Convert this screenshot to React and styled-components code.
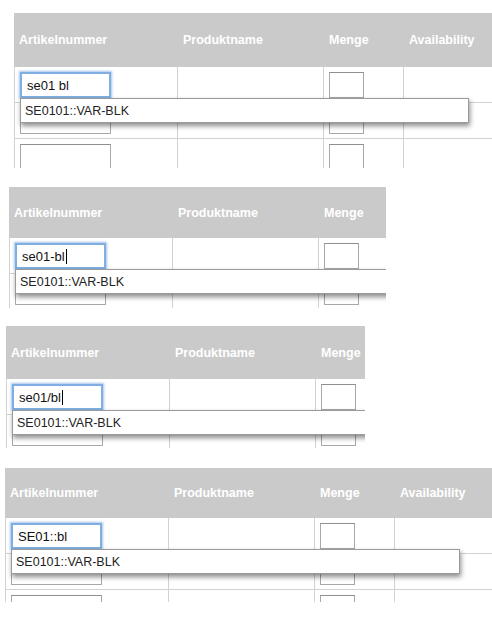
import React from 'react';
import styled, { createGlobalStyle } from 'styled-components';

const GlobalStyle = createGlobalStyle`
  html, body {
    margin: 0;
    padding: 0;
    background: #ffffff;
    overflow: hidden;
  }
  body {
    font-family: "Liberation Sans", Arial, sans-serif;
  }
`;

const Page = styled.div`
  display: flex;
  flex-direction: column;
  align-items: flex-start;
  padding-top: 13px;
`;

const Shot = styled.div`
  position: relative;
  overflow: hidden;
  margin-top: ${props => props.top}px;
  margin-left: ${props => props.left}px;
  width: ${props => props.width}px;
  height: ${props => props.height}px;
`;

const Grid = styled.div`
  display: grid;
  grid-template-columns: ${props => (props.cols === 4 ? '164px 146px 80px 130px' : '164px 146px 80px')};
  width: max-content;
`;

const Th = styled.div`
  box-sizing: border-box;
  height: ${props => props.h}px;
  background-color: #cacaca;
  color: #ffffff;
  font-weight: bold;
  font-size: 12.5px;
  display: flex;
  align-items: center;
  padding: 0 5px;
  white-space: nowrap;
`;

const Td = styled.div`
  position: relative;
  box-sizing: border-box;
  height: 36px;
  padding: 5px 0 0 5px;
  border-right: 1px solid #d2d2d2;
  border-bottom: 1px solid #d2d2d2;
  border-left: ${props => (props.first ? '1px solid #d2d2d2' : 'none')};
`;

const Field = styled.div`
  box-sizing: border-box;
  width: ${props => props.w}px;
  height: 26px;
  background: #ffffff;
  border: 1px solid #a8a8a8;
  border-top-color: #8f8f8f;
  display: flex;
  align-items: center;
  padding-left: 6px;
  font-size: 13px;
  color: #111111;
  ${props =>
    props.focused &&
    `
    border: 2px solid #7eaee2;
    box-shadow: 0 0 2px 1px rgba(95, 150, 215, 0.55);
    padding-left: 5px;
  `}
`;

const Caret = styled.span`
  display: inline-block;
  width: 1px;
  height: 15px;
  margin-left: 1px;
  background: #000000;
`;

const Suggestions = styled.div`
  position: absolute;
  z-index: 5;
  top: 31px;
  left: 5px;
  width: 449px;
  height: 25px;
  box-sizing: border-box;
  background: #ffffff;
  border: 1px solid #9a9a9a;
  box-shadow: 1px 3px 5px rgba(0, 0, 0, 0.45);
  display: flex;
  align-items: center;
  padding-left: 4px;
  font-size: 12.5px;
  color: #222222;
`;

const headers = ['Artikelnummer', 'Produktname', 'Menge', 'Availability'];

const shots = [
  { top: 0, left: 14, width: 478, height: 155, headH: 54, cols: 4, query: 'se01 bl', caret: false },
  { top: 19, left: 9, width: 377, height: 121, headH: 51, cols: 3, query: 'se01-bl', caret: true },
  { top: 18, left: 6, width: 359, height: 122, headH: 53, cols: 3, query: 'se01/bl', caret: true },
  { top: 20, left: 5, width: 487, height: 134, headH: 50, cols: 4, query: 'SE01::bl', caret: false },
];

const OrderRow = ({ cols, active, query, caret }) => (
  <>
    <Td first>
      <Field w={91} focused={active}>
        {active && query}
        {active && caret && <Caret />}
      </Field>
      {active && <Suggestions>SE0101::VAR-BLK</Suggestions>}
    </Td>
    <Td />
    <Td>
      <Field w={35} />
    </Td>
    {cols === 4 && <Td />}
  </>
);

const App = () => (
  <>
    <GlobalStyle />
    <Page>
      {shots.map((s, i) => (
        <Shot key={i} top={s.top} left={s.left} width={s.width} height={s.height}>
          <Grid cols={s.cols}>
            {headers.slice(0, s.cols).map(h => (
              <Th key={h} h={s.headH}>{h}</Th>
            ))}
            <OrderRow cols={s.cols} active query={s.query} caret={s.caret} />
            <OrderRow cols={s.cols} />
            <OrderRow cols={s.cols} />
          </Grid>
        </Shot>
      ))}
    </Page>
  </>
);

export default App;
